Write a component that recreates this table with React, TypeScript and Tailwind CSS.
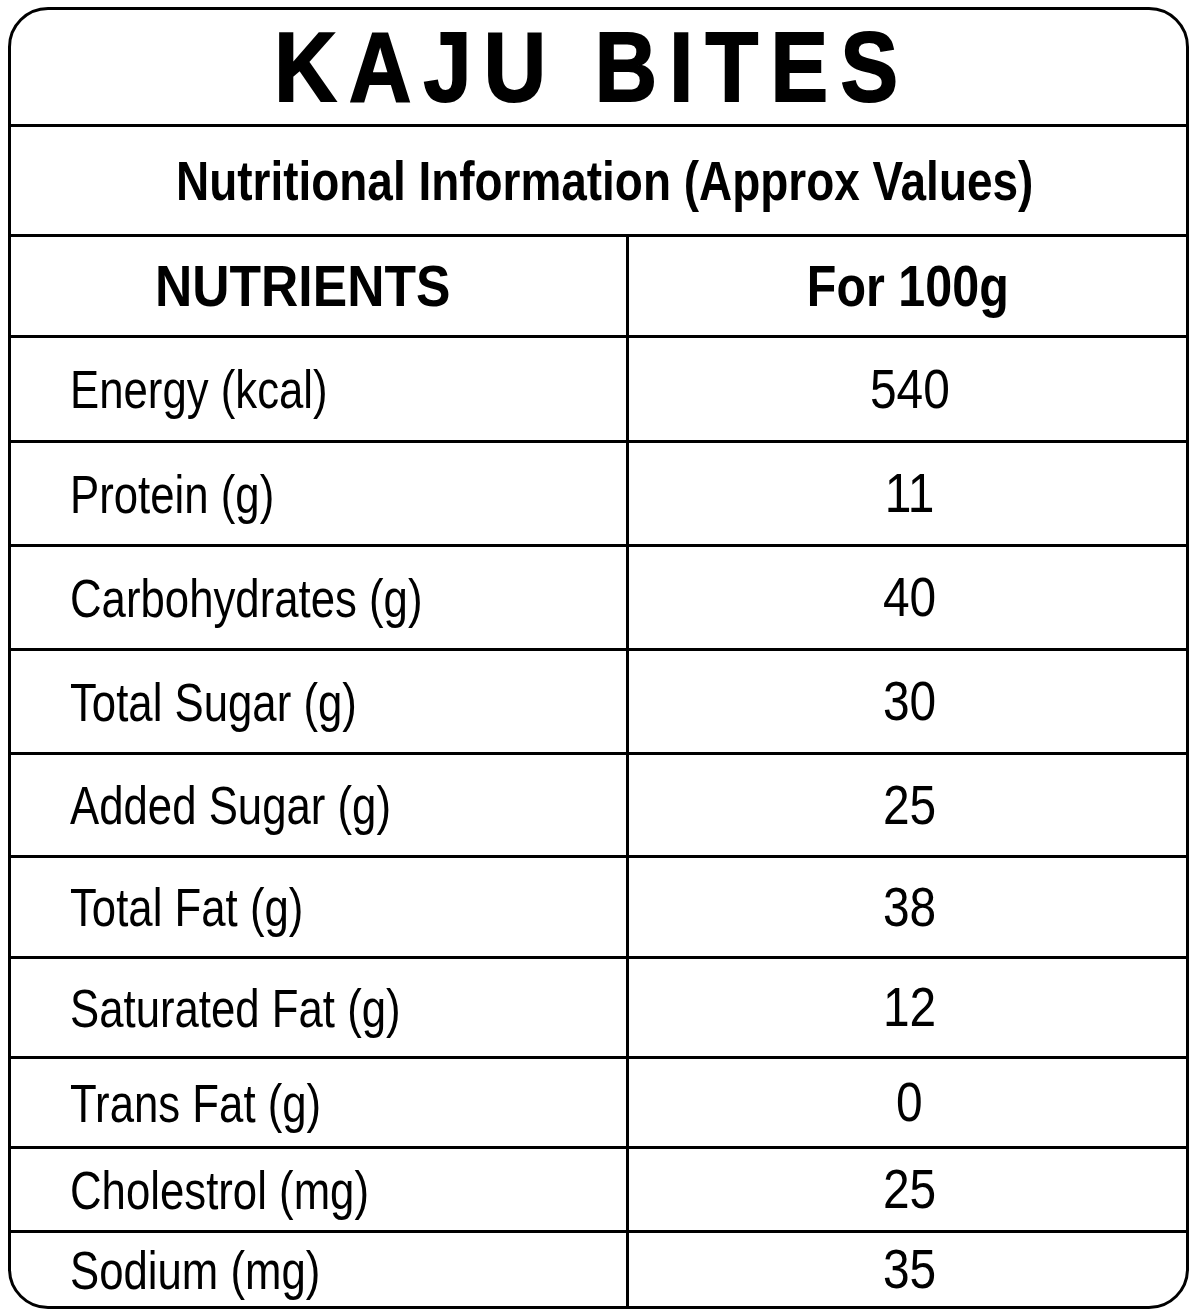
import React from "react";

const rows = [
  { label: "Energy (kcal)", value: "540", h: "h-[105px]" },
  { label: "Protein (g)", value: "11", h: "h-[104px]" },
  { label: "Carbohydrates (g)", value: "40", h: "h-[104px]" },
  { label: "Total Sugar (g)", value: "30", h: "h-[104px]" },
  { label: "Added Sugar (g)", value: "25", h: "h-[103px]" },
  { label: "Total Fat (g)", value: "38", h: "h-[101px]" },
  { label: "Saturated Fat (g)", value: "12", h: "h-[100px]" },
  { label: "Trans Fat (g)", value: "0", h: "h-[90px]" },
  { label: "Cholestrol (mg)", value: "25", h: "h-[84px]" },
  { label: "Sodium (mg)", value: "35", h: "h-[73px]" },
];

// condensed look: no narrow face installed, so squeeze Liberation Sans
const squeeze = "inline-block whitespace-nowrap";

export default function App() {
  return (
    <div className="min-h-[1313px] w-[1198px] bg-white pl-[8px] pt-[7px]">
      <div className="w-[1181px] overflow-hidden rounded-[40px] border-[3px] border-black font-['Liberation_Sans',Arial,sans-serif] text-black">
        {/* Title */}
        <div className="flex h-[117px] items-center justify-center border-b-[3px] border-black pr-[12px]">
          <h1
            className={`${squeeze} origin-center scale-x-[0.88] text-[98px] font-bold leading-none tracking-[14px] [-webkit-text-stroke:2px_black]`}
          >
            KAJU BITES
          </h1>
        </div>

        {/* Subtitle */}
        <div className="flex h-[110px] items-center justify-center border-b-[3px] border-black pl-[12px]">
          <h2 className={`${squeeze} origin-center scale-x-[0.82] text-[56px] font-bold leading-none`}>
            Nutritional Information (Approx Values)
          </h2>
        </div>

        {/* Header */}
        <div className="grid h-[101px] grid-cols-[618px_1fr] border-b-[3px] border-black">
          <div className="flex items-center border-r-[3px] border-black pl-[144px]">
            <span className={`${squeeze} origin-left scale-x-[0.89] text-[58px] font-bold leading-none`}>
              NUTRIENTS
            </span>
          </div>
          <div className="flex items-center justify-center">
            <span className={`${squeeze} origin-center scale-x-[0.85] text-[57px] font-bold leading-none`}>
              For 100g
            </span>
          </div>
        </div>

        {/* Rows */}
        {rows.map((row, i) => (
          <div
            key={row.label}
            className={`grid grid-cols-[618px_1fr] ${row.h} ${i < rows.length - 1 ? "border-b-[3px] border-black" : ""}`}
          >
            <div className="flex items-center border-r-[3px] border-black pl-[59px]">
              <span className={`${squeeze} origin-left scale-x-[0.81] text-[54px] leading-none`}>
                {row.label}
              </span>
            </div>
            <div className="flex items-center justify-center pl-[4px]">
              <span className={`${squeeze} origin-center scale-x-[0.87] text-[55px] leading-none`}>
                {row.value}
              </span>
            </div>
          </div>
        ))}
      </div>
    </div>
  );
}
